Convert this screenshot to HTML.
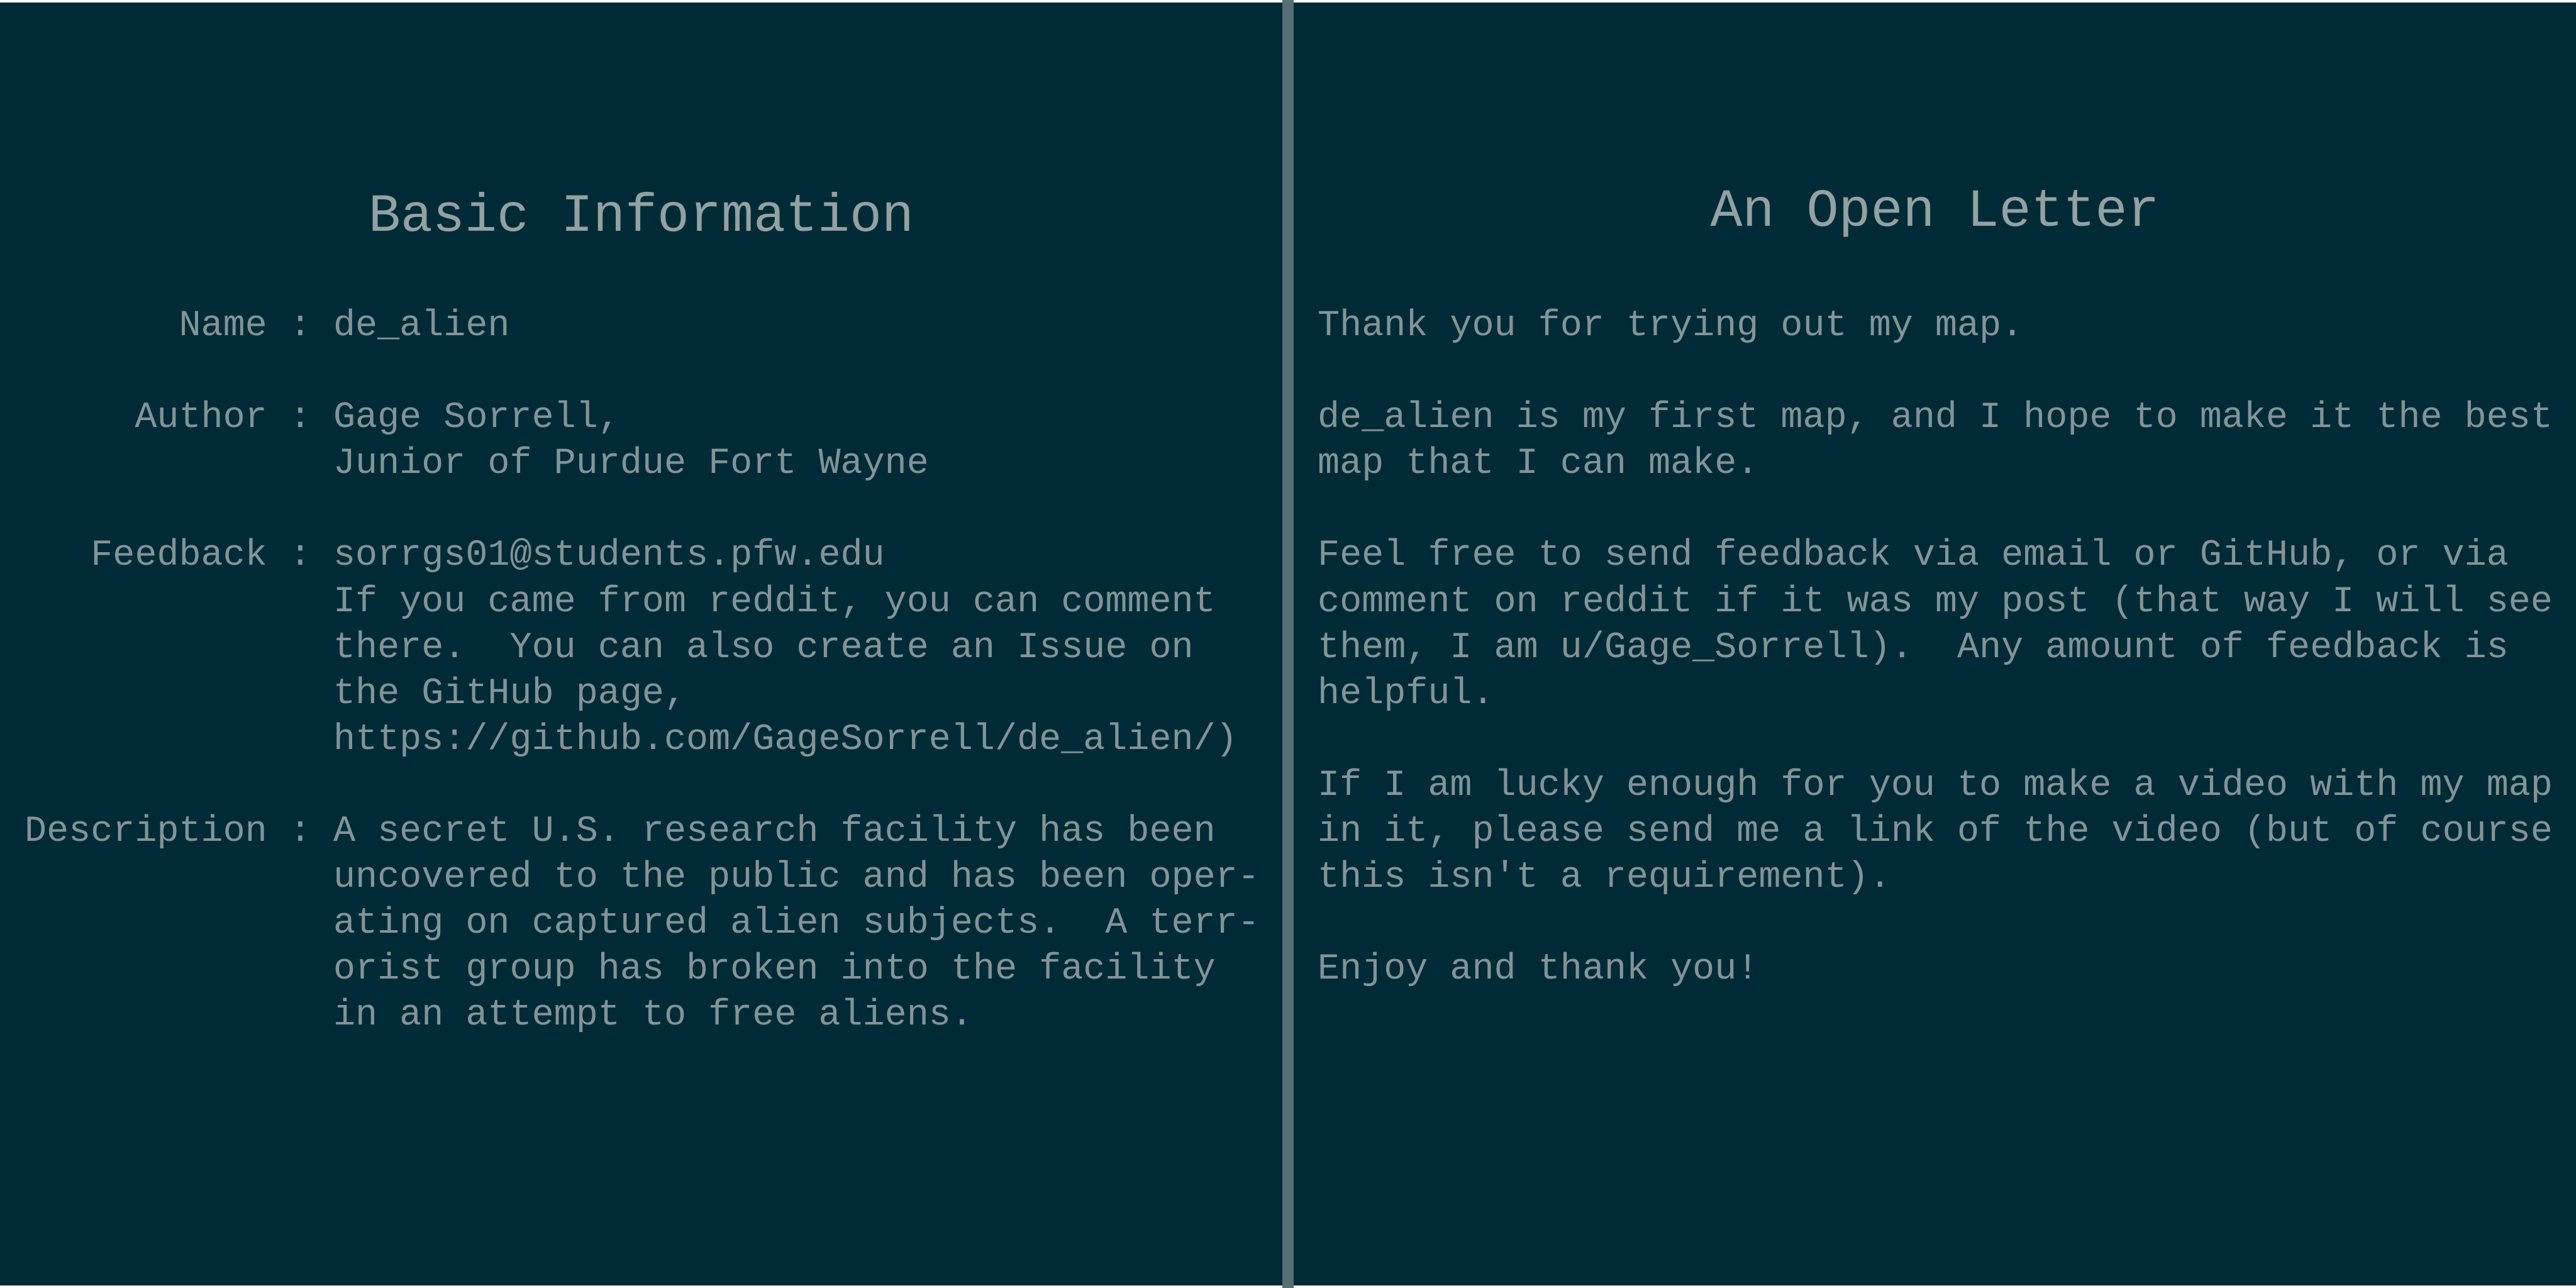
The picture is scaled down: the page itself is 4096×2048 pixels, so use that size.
<!DOCTYPE html>
<html><head><meta charset="utf-8"><style>
html,body{margin:0;padding:0;}
body{width:4096px;height:2048px;background:#fff;position:relative;overflow:hidden;font-family:"Liberation Mono",monospace;}
.bg{position:absolute;left:0;top:4px;width:4096px;height:2040px;background:#002b36;}
.div{position:absolute;left:2039px;top:0;width:18px;height:2048px;background:#586e75;}
h1{position:absolute;margin:0;font-weight:normal;font-size:85px;line-height:100px;color:#93a1a1;text-align:center;white-space:pre;}
pre{position:absolute;margin:0;font-family:"Liberation Mono",monospace;font-size:58.45px;line-height:73.1px;color:#839496;}
</style></head><body>
<div class="bg"></div>
<div class="div"></div>
<h1 style="left:0;width:2039px;top:295px;">Basic Information</h1>
<h1 style="left:2057px;width:2039px;top:287px;">An Open Letter</h1>
<pre style="left:39px;top:481px;">       Name : de_alien

     Author : Gage Sorrell,
              Junior of Purdue Fort Wayne

   Feedback : sorrgs01@students.pfw.edu
              If you came from reddit, you can comment
              there.  You can also create an Issue on
              the GitHub page,
              https://github.com/GageSorrell/de_alien/)

Description : A secret U.S. research facility has been
              uncovered to the public and has been oper-
              ating on captured alien subjects.  A terr-
              orist group has broken into the facility
              in an attempt to free aliens.</pre>
<pre style="left:2095px;top:481px;">Thank you for trying out my map.

de_alien is my first map, and I hope to make it the best
map that I can make.

Feel free to send feedback via email or GitHub, or via
comment on reddit if it was my post (that way I will see
them, I am u/Gage_Sorrell).  Any amount of feedback is
helpful.

If I am lucky enough for you to make a video with my map
in it, please send me a link of the video (but of course
this isn't a requirement).

Enjoy and thank you!</pre>
</body></html>
